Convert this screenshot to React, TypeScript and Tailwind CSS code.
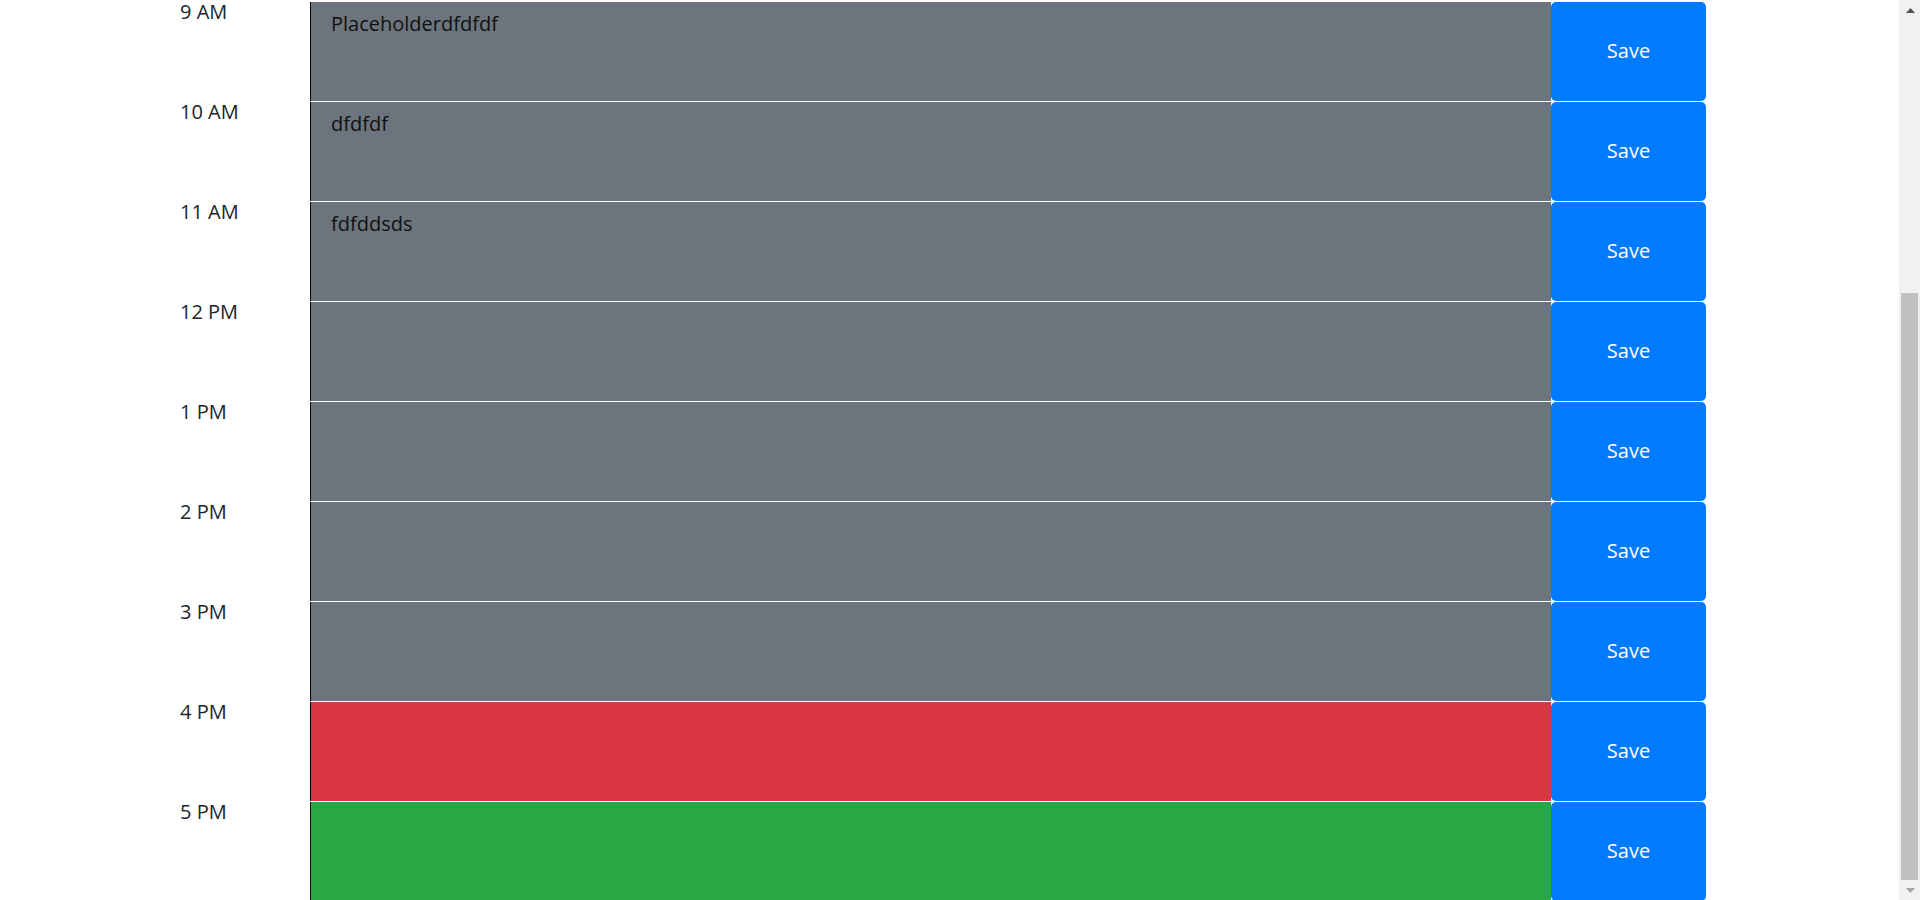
import { useState } from "react";

type Slot = { hour: string; text: string; tense: "past" | "present" | "future" };

const slots: Slot[] = [
  { hour: "9 AM", text: "Placeholderdfdfdf", tense: "past" },
  { hour: "10 AM", text: "dfdfdf", tense: "past" },
  { hour: "11 AM", text: "fdfddsds", tense: "past" },
  { hour: "12 PM", text: "", tense: "past" },
  { hour: "1 PM", text: "", tense: "past" },
  { hour: "2 PM", text: "", tense: "past" },
  { hour: "3 PM", text: "", tense: "past" },
  { hour: "4 PM", text: "", tense: "present" },
  { hour: "5 PM", text: "", tense: "future" },
];

const tenseBg = {
  past: "bg-[#6c757d]",
  present: "bg-[#dc3545]",
  future: "bg-[#28a745]",
};

function TimeBlock({ slot }: { slot: Slot }) {
  const [value, setValue] = useState(slot.text);

  return (
    <div className="flex h-[100px] shrink-0 border-t border-white">
      <div className="w-[310px] shrink-0 pl-[180px] text-[20px] leading-none text-[#212529]">
        {slot.hour}
      </div>
      <textarea
        value={value}
        onChange={e => setValue(e.target.value)}
        className={`w-[1241px] shrink-0 resize-none border-l border-black pl-[20px] pt-[12px] pr-3 text-[20px] leading-none text-[#111] outline-none ${tenseBg[slot.tense]}`}
      />
      <button
        type="button"
        className="w-[155px] shrink-0 rounded-[5px] bg-[#007bff] pb-[2px] text-[20px] text-white"
      >
        Save
      </button>
    </div>
  );
}

// fake browser scrollbar, page is shown scrolled to the bottom
function Scrollbar() {
  return (
    <div className="flex h-full w-[21px] shrink-0 flex-col bg-[#f1f1f1]">
      <div className="flex h-[21px] items-center justify-center pl-[1px]">
        <svg width="9" height="5" viewBox="0 0 9 5">
          <path d="M4.5 0 L9 5 L0 5 Z" fill="#505050" />
        </svg>
      </div>
      <div className="h-[272px]" />
      <div className="mx-[2px] h-[587px] bg-[#c1c1c1]" />
      <div className="flex h-[20px] items-center justify-center pl-[1px] pt-[1px]">
        <svg width="9" height="5" viewBox="0 0 9 5">
          <path d="M0 0 L9 0 L4.5 5 Z" fill="#a3a3a3" />
        </svg>
      </div>
    </div>
  );
}

export default function App() {
  return (
    <div
      className="flex h-[900px] w-full overflow-hidden bg-white"
      style={{ fontFamily: '"Open Sans", "Noto Sans", sans-serif' }}
    >
      <div className="flex flex-1 flex-col pt-px">
        {slots.map(slot => (
          <TimeBlock key={slot.hour} slot={slot} />
        ))}
      </div>
      <Scrollbar />
    </div>
  );
}
